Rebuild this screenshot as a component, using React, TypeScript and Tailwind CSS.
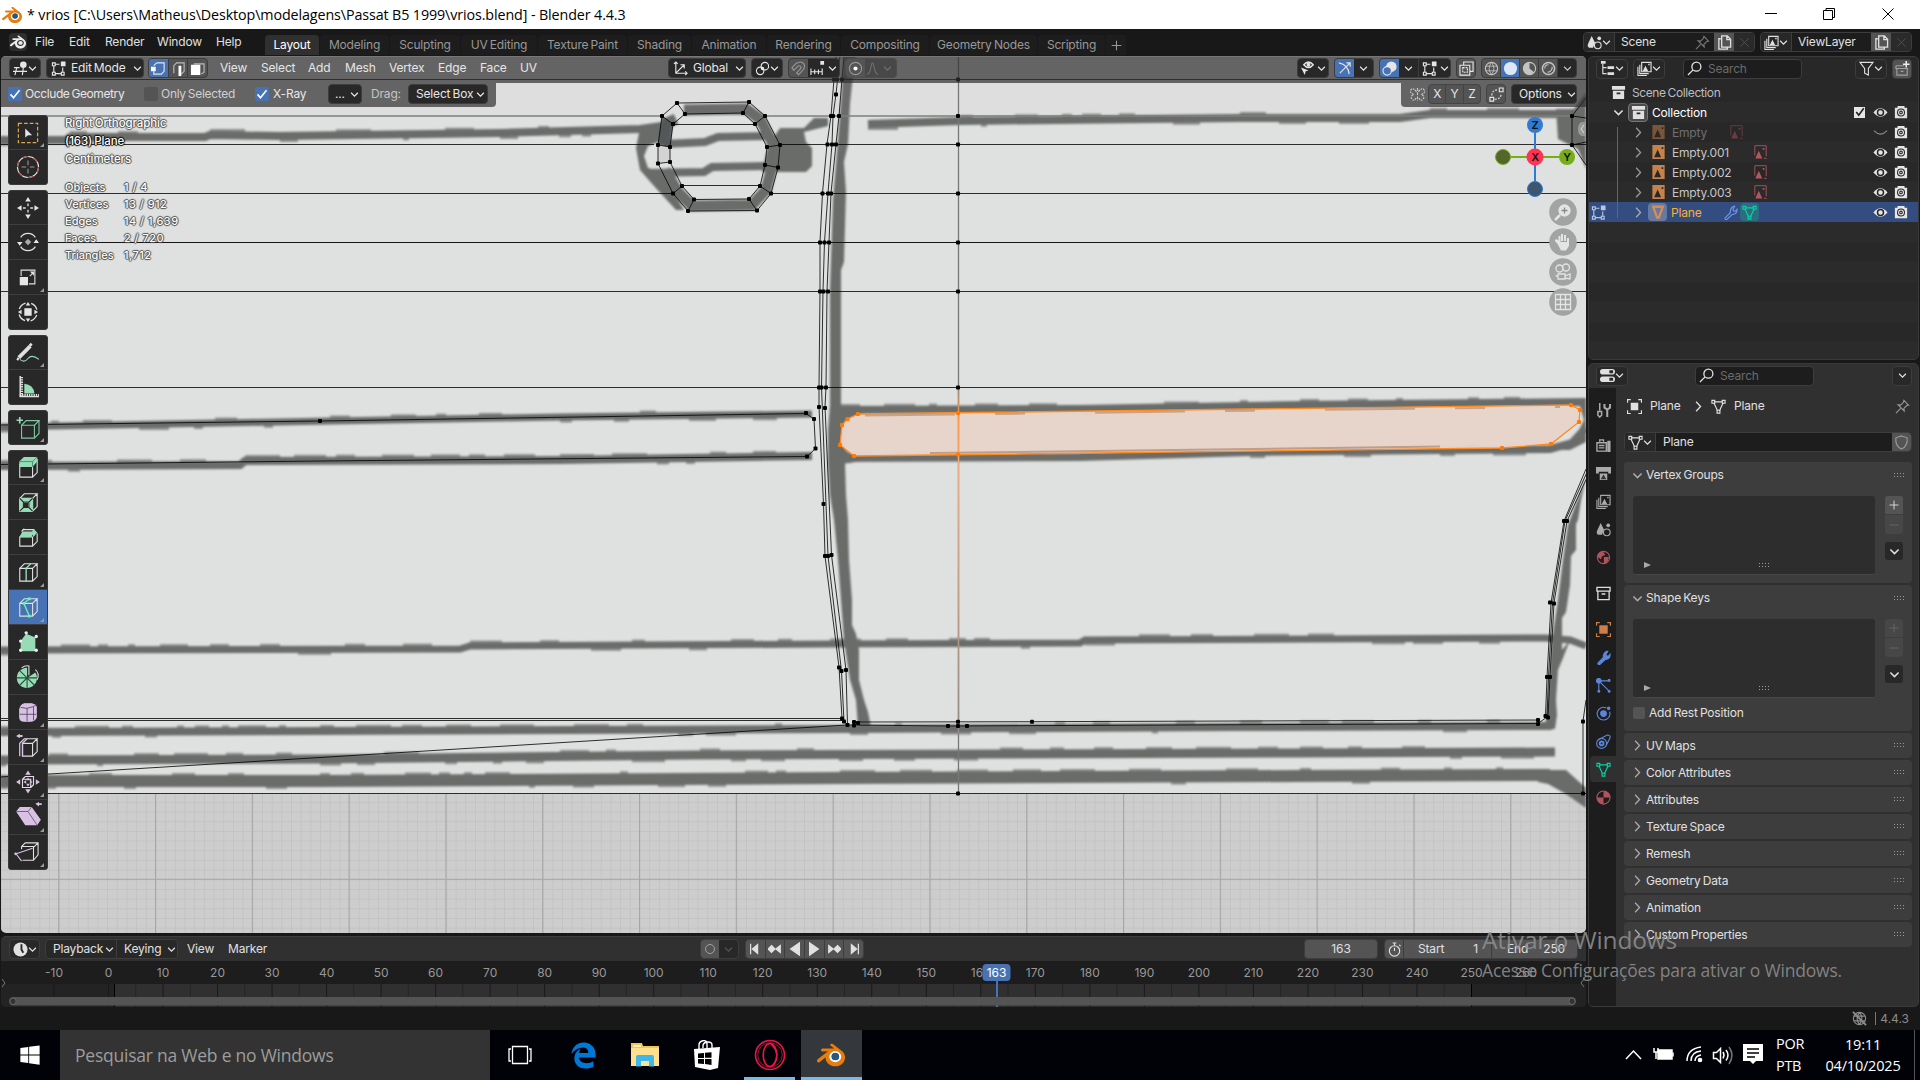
import type { ReactNode } from 'react';
import { FaEdgeLegacy, FaWindows } from 'react-icons/fa6';
import { SiBlender } from 'react-icons/si';

type IconProps = { className?: string; children?: ReactNode };

/* ---------- icons ---------- */

function Ico({ className = 'w-[15px] h-[15px]', children }: IconProps) {
    return (
        <svg viewBox="0 0 16 16" className={`${className} shrink-0`} fill="none" stroke="currentColor" strokeWidth="1.2">
            {children}
        </svg>
    );
}

const Chevron = ({ className = 'w-[9px] h-[9px]' }: IconProps) => (
    <Ico className={className}><path d="M2 5l6 6 6-6" strokeWidth="2.200" /></Ico>
);
const ChevronRight = ({ className = 'w-[11px] h-[11px]' }: IconProps) => (
    <Ico className={className}><path d="M4.500 1l6.500 7-6.500 7" strokeWidth="1.900" /></Ico>
);
const Search = () => <Ico><circle cx="10" cy="6" r="4.800" strokeWidth="1.400" /><path d="M6.500 9.500L1 15" strokeWidth="1.400" /></Ico>;
const Pin = () => <Ico><path d="M9.500 1.500l5 5-2 .5-3 3 .3 2.700-6.500-6.500 2.700.3 3-3zM6 10l-5 5" /></Ico>;
const NewDoc = () => <Ico><path d="M4 4H2v11h9v-2M5 1h6l3.500 3.500V13H5zM10.500 1v4h4" strokeWidth="1.400" /></Ico>;
const Cross = () => <Ico className="w-[11px] h-[11px]"><path d="M2 2l12 12M14 2L2 14" /></Ico>;
const MeshData = ({ className }: IconProps) => (
    <Ico className={className}><path d="M3.500 3h9M3 4l4 8.500M13 4L9 12.500" /><path d="M1 1.500h3v3H1zM12 1.500h3v3h-3zM6.500 12h3v3h-3z" /></Ico>
);
const EditMode = ({ className }: IconProps) => (
    <Ico className={className}>
        <path d="M1.500 2h3v3h-3zM1.500 12h3v3h-3zM11 12h3v3h-3zM3 5v7M4.500 13.500H11M12.500 7v5M4.500 3.500H9" />
        <path d="M10.500.5h5v5h-5z" fill="currentColor" stroke="none" />
    </Ico>
);
const Layers = ({ className }: IconProps) => (
    <Ico className={className}>
        <path d="M5 1.500h10v10H5zM3 4v9.500h9.500M1 6v9.500h9.500" />
        <path d="M6 11l3-6 3 6zM12 3h1.500v1.500H12z" fill="currentColor" stroke="none" />
    </Ico>
);
const SceneIcon = ({ className }: IconProps) => (
    <Ico className={className}>
        <path d="M5 1l3.500 7-2 5.500H2Q0 12 1 9.500z" fill="currentColor" stroke="none" />
        <circle cx="11.500" cy="11" r="3.600" /><circle cx="13" cy="3.500" r="2" fill="currentColor" stroke="none" />
    </Ico>
);
const Archive = ({ className }: IconProps) => (
    <Ico className={className}><path d="M1 1.500h14v4H1zM2 5.500h12v9H2zM6 8.500h4" strokeWidth="1.400" /></Ico>
);
const ArchiveSolid = () => (
    <Ico><path d="M1 1h14v4H1zM2 6h12v9H2z" fill="currentColor" stroke="none" /><path d="M6 9h4" stroke="#282828" strokeWidth="1.800" /></Ico>
);
const Eye = () => (
    <Ico><path d="M.5 8Q8-1 15.500 8 8 17 .5 8z" fill="currentColor" stroke="none" /><circle cx="8" cy="8" r="3.200" stroke="#282828" strokeWidth="1.600" /></Ico>
);
const EyeShut = () => <Ico><path d="M1 6q7 7.500 14 0" /></Ico>;
const Camera = () => (
    <Ico className="w-[14px] h-[14px]"><path d="M1 3h3V1h8v2h3v12H1z" fill="currentColor" stroke="none" /><circle cx="8" cy="8.500" r="4" stroke="#282828" /><circle cx="8" cy="8.500" r="1.500" stroke="#282828" /></Ico>
);
const ImageSolid = ({ className }: IconProps) => (
    <Ico className={className}><path d="M1 0h14v16H1z" fill="currentColor" stroke="none" /><path d="M3 14l4-9 4 9zM11.500 2.500h2v2h-2z" fill="#282828" stroke="none" /></Ico>
);
const ImageLine = ({ className }: IconProps) => (
    <Ico className={className}><path d="M1.500 12V.8h13v12M12 15.200h3" strokeWidth="1" /><path d="M2 15.500l4-9 4 9zM10.500 3.500h2v2h-2z" fill="currentColor" stroke="none" /></Ico>
);
const Wrench = ({ className }: IconProps) => (
    <Ico className={className}><path d="M2 14l6-6Q7 4 11 1.500l1.500 0-2 3.500 1 1.500h2l1.500-2q.5 5-5 5.500l-6 5.500q-2 .5-2-1.500z" /></Ico>
);
const Dots = () => (
    <svg viewBox="0 0 11 5" className="w-[11px] h-[5px] shrink-0" fill="#9a9a9a">
        {[0, 3, 6, 9].map((x) => [0, 3].map((y) => <rect key={`${x}-${y}`} x={x} y={y} width="1" height="1" />))}
    </svg>
);
const BlenderColor = ({ className }: IconProps) => (
    <svg viewBox="0 0 24 24" className={className}>
        <circle cx="15.700" cy="13.300" r="5.600" fill="#fff" />
        <SiBlender color="#e87d0d" size={24} />
        <circle cx="15.700" cy="13.300" r="3.300" fill="#265787" />
    </svg>
);

/* ---------- viewport drawing ---------- */

// scanned blueprint lines: points + thickness
const STROKES: [string, number][] = [
    ['0,140 66,140 70,137 205,137 210,135 280,136 500,133 640,129 662,126', 8],
    ['868,124 960,121 1240,118 1400,118 1430,114 1570,114', 8],
    ['0,427 330,421 560,417 812,414', 7],
    ['0,466 240,465 245,461 560,460 812,456', 8],
    ['838,410 1080,409 1300,405 1586,402', 8],
    ['838,458 1080,457 1250,452 1440,450 1550,449 1572,443 1586,428', 8],
    ['0,650 460,649 470,646 830,644 1080,643 1085,640 1545,638 1570,640 1586,646', 7],
    ['0,732 320,731 850,729 1240,727 1552,726', 8],
    ['0,760 320,759 700,755 1000,754 1300,753 1555,752', 9],
    ['0,781 320,781 840,778 1300,776 1550,775', 12],
];

const BLACK_LINES = [
    '0,79.500 1586,79.500', '0,144.500 654,144.500', '780,144.500 1586,144.500', '0,193.500 672,193.500', '771,193.500 1586,193.500',
    '0,291.500 1586,291.500', '0,387.500 1586,387.500', '0,793.500 1586,793.500',
    '0,425 320,421 806,413.500 814,419 815.500,448.500 807,456.500 320,461 0,464.500',
    '836,56 834,79 831,116 827,144 822.500,193 820,242 820,291 819,387 819,407 823.500,504 825,556 839,667 842,718.500',
    '840,56 836,94 833,116 832,144 828,193 824.500,242 823,291 821.500,387 828,556 841.500,671 844,721.500',
    '844,56 842,79 839,116 836,144 831,193 829,242 827,291 826,387 825,407 831.500,555 846,670 847.500,725',
    '0,718.500 842,718.500 847.500,725', '0,720.500 842,720.500',
    '0,777 320,757.500 847,725', '854,722 1032,721.700 1538,720', '847,725 948,726 1538,723.500 1547,717',
    '1586,469 1564,521 1551,603 1547,677 1545.500,716', '1588,470 1565,521 1552.500,603 1548.500,677 1547,717', '1590,471 1567,521 1554,603 1550,677 1548,717',
    '1586,700 1583,721 1583,793',
    '1586,98 1572,116 1572,145 1586,165', '1572,116 1586,118', '1572,145 1586,142',
];

const RING_OUTER = [[677, 103], [749, 102], [765, 116], [780, 145], [778, 167.500], [771, 193.500], [757, 210.500], [688, 211], [673, 193.500], [658, 163.500], [658, 145], [662, 116]];
const RING_INNER = [[685, 114], [743, 113], [755, 124], [767, 147], [765, 165], [760, 186], [749, 199], [694, 199.500], [682, 186], [670, 162], [670, 147], [673, 124]];

const BLACK_DOTS = [
    ...RING_OUTER, ...RING_INNER,
    ...[79.500, 116, 144.500, 193.500, 242.500, 291.500, 387.500, 721.700, 726, 793.500].map((y) => [958, y]),
    [834, 79.500], [837, 79.500], [842, 79.500], [836, 94.500], [831, 116], [833, 116], [839, 116], [827.500, 144.500], [832, 144.500], [836, 144.500],
    [822.500, 193.500], [828, 193.500], [831, 193.500], [820, 242.500], [824.500, 242.500], [829, 242.500], [820, 291.500], [823.500, 291.500], [828, 291.500],
    [819, 387.500], [821.500, 387.500], [826, 387.500], [819, 407], [825, 408], [823.500, 504], [825, 556], [828, 556], [831.500, 555],
    [839, 667.500], [841.500, 671], [846, 670], [842, 718.500], [844, 721.500], [847.500, 725], [854, 722], [858, 723], [854, 725.500],
    [948, 726], [967, 726], [1032, 721.700], [320, 421], [806, 413], [814, 419], [815.500, 448.500], [807, 456.500],
    [1564, 521], [1567, 521], [1550, 602.500], [1554, 603.500], [1547, 677], [1550, 677], [1538, 720], [1538, 724], [1545.500, 716], [1548, 717.500],
    [1583, 721.500], [1583, 793.500], [1572, 116], [1572, 145],
];

const ORANGE_DOTS = [[858, 414], [847.500, 419], [842, 425], [840, 445], [854, 456], [958, 413], [958, 454.500], [1571, 405], [1580, 410], [1579, 422], [1551, 444], [1502, 448]];

const toPoints = (list: number[][]) => list.map((p) => p.join(',')).join(' ');

// ragged pixels sitting on the edges of a scanned line
function ragged(points: string, width: number) {
    const pts = points.split(' ').map((p) => p.split(',').map(Number));
    const out: ReactNode[] = [];
    let seed = Math.round(pts[0][1]) * 7 + 3;
    for (let i = 0; i < pts.length - 1; i++) {
        const [x0, y0] = pts[i];
        const [x1, y1] = pts[i + 1];
        for (let x = x0; x < x1 - 40;) {
            seed = (seed * 1103 + 12345) % 65536;
            const w = 6 + (seed % 30);
            const y = y0 + ((y1 - y0) * (x - x0)) / (x1 - x0);
            const top = seed % 3 !== 0;
            out.push(<rect key={`${i}-${x}`} x={x} y={top ? y - width / 2 - 2 : y + width / 2 - 1} width={w} height="3" />);
            x += w + 8 + (seed % 37);
        }
    }
    return out;
}

function Scene() {
    return (
        <svg className="absolute left-0 top-0 w-[1585px] h-[877px]" viewBox="1 56 1585 877">
            <defs>
                <filter id="soft"><feGaussianBlur stdDeviation="1" /></filter>
                <pattern id="minor" x="58.700" y="879.300" width="9.680" height="9.680" patternUnits="userSpaceOnUse">
                    <path d="M0 .5H9.680M.5 0V9.680" stroke="#c3c3c3" />
                </pattern>
                <pattern id="major" x="58.200" y="878.800" width="96.800" height="96.800" patternUnits="userSpaceOnUse">
                    <path d="M0 .5H96.800M.5 0V96.800" stroke="#a6a6a6" strokeWidth="1.200" />
                </pattern>
                <linearGradient id="edge" gradientUnits="userSpaceOnUse" x1="0" y1="387" x2="0" y2="735">
                    <stop offset="0" stopColor="#9a8a80" /><stop offset="0.100" stopColor="#ff9a45" /><stop offset="0.250" stopColor="#eaae88" /><stop offset="1" stopColor="#948a85" />
                </linearGradient>
            </defs>
            <rect x="0" y="56" width="1586" height="60" fill="#dedede" />
            <rect x="0" y="116" width="1586" height="678" fill="#dfe1e0" />
            <rect x="0" y="794" width="1586" height="140" fill="#cdcdcd" />
            <rect x="0" y="794" width="1586" height="140" fill="url(#minor)" />
            <rect x="0" y="794" width="1586" height="140" fill="url(#major)" />

            <g filter="url(#soft)" fill="none" stroke="#6b6c6b">
                {STROKES.map(([pts, w]) => <polyline key={pts} points={pts} strokeWidth={w} />)}
                <g fill="#6b6c6b" stroke="none" opacity="0.7">
                    {STROKES.map(([pts, w]) => <g key={pts}>{ragged(pts, w)}</g>)}
                </g>
                <g fill="#6b6c6b" stroke="none">
                    <path d="M844 56L856 56 852 84 850 104 848 144 844 162 846 192 844 262 841 270 841 405 845 412 845 462 846 495 848 520 849 560 852 600 852 625 856 634 859 650 859 680 864 700 868 712 871 727 858 727 856 700 850 680 844 640 841 600 838 560 834 520 830 495 828 462 828 430 830 405 830 290 833 200 838 140 842 90z" />
                    <path d="M838 407H864L863 414 847 420 842 426V446L852 456 866 460 850 463 838 464z" />
                    <path d="M1586 478L1581 500 1578 520 1576 524V550L1571 556 1570 585 1566 612 1562 618V650L1570 640 1563 658 1558 670 1556 700 1557 715 1555 729H1545L1548 700 1552 640 1558 600 1563 560 1568 525z" />
                    <path d="M1556 109h18l12-16v76l-8-20-8-4-12-6z" />
                    <path d="M640 128l26-2-8 16-10 4-4 10 4 12 14 4 10 18 12 20h-8l-22-24-14-16-4-22z" />
                    <path d="M780 128l24 0 10-10h14v8l-24 6 2 10 6 6v18l-6 6h-44l6-26z" />
                    <path d="M1586 400v42l-16 8-20 0 24-10 10-20-4-14z" />
                    <path d="M1538 770h28l20 18v20l-20-14-18-10-10-2z" />
                </g>
                <path d="M684 110L746 109 760 119 774 146M772 167L766 190 752 205 692 206 678 192 665 170M676 119L667 123 664 145" strokeWidth="11" />
                <path d="M664 144L705 142 718 137 768 136M646 173L704 172 712 167 770 166" strokeWidth="8" />
            </g>
            <polygon points="662,116 673,124 670,147 658,145" fill="#4c4e50" opacity="0.7" />
            <polygon points="658,145 670,147 670,162 658,163" fill="#d2d3d2" />

            <polygon points="858,414 1571,405 1580,410 1579,422 1551,444 1502,448 854,456 840,445 842,425 847.500,419" fill="#e7d5cb" fillOpacity="0.97" stroke="#ff8a1e" strokeWidth="1.300" />
            <path d="M865 415.500L1560 407" stroke="#b08468" strokeWidth="2" opacity="0.6" strokeDasharray="90 40 30 70" />
            <path d="M930 453L1440 446.500" stroke="#a87a5e" strokeWidth="2" opacity="0.6" />

            <path d="M0 116H662M765 116H1572" stroke="#7d7f7e" strokeWidth="1.500" />
            <path d="M0 242.500H1586" stroke="#151515" strokeWidth="1.200" />
            <path d="M958.500 56V793" stroke="#777" strokeWidth="1.300" />
            <path d="M958 387h1V735h-1z" fill="url(#edge)" stroke="url(#edge)" strokeWidth=".5" />
            <g fill="none" stroke="#000" strokeOpacity="0.8">
                {BLACK_LINES.map((pts) => <polyline key={pts} points={pts} />)}
                <polygon points={toPoints(RING_OUTER)} />
                <polygon points={toPoints(RING_INNER)} />
                {RING_OUTER.map((p, i) => <line key={i} x1={p[0]} y1={p[1]} x2={RING_INNER[i][0]} y2={RING_INNER[i][1]} />)}
                <path d="M673 124.500H755M682 185.500H760" />
            </g>
            {BLACK_DOTS.map(([x, y], i) => <rect key={i} x={x - 2} y={y - 2} width="4" height="4" rx="1" />)}
            {ORANGE_DOTS.map(([x, y], i) => <rect key={i} x={x - 2} y={y - 2} width="4" height="4" rx="1" fill="#ff7a00" />)}
        </svg>
    );
}

function NavGizmo() {
    return (
        <svg className="absolute left-[1490px] top-[56px] w-[95px] h-[210px]" viewBox="1491 112 95 210">
            <path d="M1535 133V181" stroke="#2f7bd3" strokeWidth="2" />
            <path d="M1511 157H1559" stroke="#77ad18" strokeWidth="2" />
            <circle cx="1535" cy="125" r="8" fill="#2f7bd3" />
            <circle cx="1503" cy="157" r="7.500" fill="#55662d" stroke="#77ad18" />
            <circle cx="1567" cy="157" r="8" fill="#77ad18" />
            <circle cx="1535" cy="189" r="7.500" fill="#3d556f" stroke="#2f7bd3" />
            <circle cx="1535" cy="157" r="8.500" fill="#ff3352" />
            <g fontFamily="Inter, sans-serif" fontSize="11" fontWeight="600" textAnchor="middle" fill="#111">
                <text x="1535" y="129">Z</text><text x="1535" y="161">X</text><text x="1567" y="161">Y</text>
            </g>
            {[212, 242, 272, 302].map((y) => <circle key={y} cx="1563" cy={y} r="13.800" fill="#a2a3a3" />)}
            <g stroke="#e4e4e4" fill="none" strokeWidth="1.300">
                <circle cx="1564.500" cy="210.500" r="5.500" fill="#e4e4e4" /><path d="M1560 215l-5 5" strokeWidth="2.500" /><path d="M1561.500 210.500h6M1564.500 207.500v6" stroke="#888" />
                <path d="M1558 243l-2.500-3 4 2v-6M1562 241v-7M1565 241v-6M1568 242v-4" strokeWidth="2" />
                <path d="M1556 241l4 1h9v4l-3 4.500h-5z" fill="#e4e4e4" stroke="none" />
                <circle cx="1559.500" cy="268.500" r="3.500" /><circle cx="1566" cy="267.500" r="3.500" /><path d="M1558 274h7v5h-7zM1565 276l5-2v5l-5-1M1558 276h-2.500" />
                <path d="M1555.500 294.500h15v15h-15zM1555.500 299.500h15M1555.500 304.500h15M1560.500 294.500v15M1565.500 294.500v15" />
            </g>
            <path d="M1586 122h-4q-4 1-4 7t4 7h4z" fill="#999" /><path d="M1584 125l-3 4 3 4" stroke="#ddd" fill="none" />
        </svg>
    );
}

/* ---------- tool icons (24 x 24) ---------- */

const CUBE = 'M3 8h14v14H3zM3 8l5-5h14l-5 5M22 3v14l-5 5';
const G = '#97dcb7';
const P = '#d9c1e6';

const TOOL_GROUPS: { id: string; corner?: boolean; active?: boolean; art: ReactNode }[][] = [
    [
        { id: 'select', corner: true, art: <><rect x="1.500" y="1.500" width="21" height="21" stroke="#d9a84f" strokeDasharray="4 2.200" strokeWidth="1.300" /><path d="M9 7v10l3-2.500h4.500z" fill="#e6e6e6" stroke="none" /></> },
        { id: 'cursor', art: <><circle cx="12" cy="12" r="11.500" /><circle cx="12" cy="12" r="11.500" stroke="#b4474b" strokeDasharray="6 6" /><path d="M12 5v5M12 14v5M5 12h5M14 12h5" stroke="#999" /></> },
    ],
    [
        { id: 'move', art: <path d="M12 0l3 5H9zM12 24l3-5H9zM0 12l5-3v6zM24 12l-5-3v6zM11.300 7h1.400v3h-1.400zM11.300 14h1.400v3h-1.400zM6.500 11.300h3v1.400h-3zM14.500 11.300h3v1.400h-3z" fill="#e6e6e6" stroke="none" /> },
        { id: 'rotate', art: <><path d="M4 7a9.500 9.500 0 0 1 16 0M20 17a9.500 9.500 0 0 1-16 0" strokeWidth="1.400" /><path d="M0 12h6l-3 4zM18 13h6l-3-4z" fill="#e6e6e6" stroke="none" /><path d="M12 8.500l3.500 3.500-3.500 3.500L8.500 12z" fill="#aaa" stroke="none" /></> },
        { id: 'scale', corner: true, art: <><path d="M4.500 11V4.500h15v15H13M14 11l4-4" /><path d="M3 12h9v9H3zM14 6h4.500v4.500z" fill="#e6e6e6" stroke="none" /></> },
        { id: 'transform', art: <><circle cx="12" cy="12" r="10" strokeDasharray="9.500 6.200" strokeDashoffset="-3.200" strokeWidth="1.500" /><path d="M8 8h8v8H8zM12 1l2.500 4h-5zM12 23l2.500-4h-5zM1 12l4-2.500v5zM23 12l-4-2.500v5z" fill="#e6e6e6" stroke="none" /></> },
    ],
    [
        { id: 'annotate', corner: true, art: <><path d="M2 17L14.500 4.500" strokeWidth="4" /><path d="M0 18l2 1M14 2l2 2" strokeWidth="3" /><path d="M3 19q5 4 9-1t12 1" stroke={G} /></> },
        { id: 'measure', art: <><path d="M5 1v22M3 21h21" strokeWidth="3" strokeDasharray="1.500 1" /><path d="M3.500 0v22.500H24" strokeWidth="1.600" /><path d="M8 19V8.500q10 1 11 10.500z" fill={G} stroke="none" /></> },
    ],
    [{ id: 'add', corner: true, art: <><path d="M5 9h14v14H5zM5 9l5-5h14l-5 5M24 4v14l-5 5" stroke="#7dc8a1" /><path d="M3 0v7M-.5 3.500h7" stroke={G} strokeWidth="1.800" /></> }],
    [
        { id: 'extrude', corner: true, art: <><path d={CUBE} /><path d="M2.500 5l5-5H22v5l-5 6H2.500z" fill={G} stroke="none" /><path d="M3 5h14l5-5M17 5v6" stroke="#2d7853" strokeWidth=".8" /></> },
        { id: 'inset', art: <><path d={CUBE} /><path d="M2.500 7.500h15v15h-15z" fill={G} stroke="none" /><path d="M7 12h6v6H7z" fill="#282828" /><path d="M7 12h6v6H7zM3 8l4 4M17 8l-4 4M3 22l4-4M17 22l-4-4" stroke="#282828" /></> },
        { id: 'bevel', art: <><path d="M3 12h14v10H3zM6 4h13M22 8v9l-5 5M5 6l3-3" /><path d="M2.500 12L6 6h12l-2 6zM18 3l4 4-4 5-2-5z" fill={G} stroke="none" /></> },
        { id: 'loopcut', corner: true, art: <><path d={CUBE} /><path d="M10 22V8l5-5" stroke={G} strokeWidth="1.500" /></> },
        { id: 'knife', corner: true, active: true, art: <><path d={CUBE} /><path d="M13.500 3L7.500 8l6 14" stroke="#6ff0ae" strokeWidth="1.500" /><path d="M12 1.500h3v3h-3zM6 6.500h3v3H6zM12 20.500h3v3h-3z" fill="#6ff0ae" stroke="none" /></> },
        { id: 'polybuild', art: <><path d="M10 3l10 4v15H4V11z" fill={G} stroke="none" /><g fill="#eee" stroke="none"><circle cx="10" cy="2" r="1.800" /><circle cx="21" cy="6" r="1.800" /><circle cx="4" cy="11" r="1.800" /><circle cx="4" cy="21" r="1.800" /><circle cx="21" cy="21" r="1.800" /></g></> },
        { id: 'spin', art: <><path d="M5 2q4-3 8-2v10M20 4q5 4 2 11" strokeWidth="1.200" /><path d="M11 13V2a11 11 0 1 0 9 5z" fill={G} stroke="none" /><path d="M11 13V24M11 13H0M11 13h11M11 13L3 5M11 13l-8 8M11 13l8 8" stroke="#23503a" /></> },
        { id: 'smooth', corner: true, art: <><path d="M8 3h8q5 1 5 4v11q-2 4-6 4H8q-5 0-5-4V9q1-5 5-6z" fill={P} stroke={P} /><path d="M3 14.500h18M11 8v14M4 7l7 1 7-2 3-2M18 6v15" stroke="#4d4454" strokeWidth=".9" /></> },
        { id: 'edgeslide', corner: true, art: <><path d="M6 8h11v14H6zM3 22V8l5-5h14l-5 5M22 3v14l-5 5" /><path d="M6 22V8l5-5" stroke={P} strokeWidth="1.500" /><path d="M-1 0l4-2.500V-1h3v2H3v1.500z" fill={P} stroke="none" /></> },
        { id: 'shrink', corner: true, art: <><path d="M6 9h9v9H6zM6 9l3-3h9v9l-3 3" /><path d="M12-.5l3 4.500H9zM12 24.500l3-4.500H9zM-1 12l4.500-3v6zM25 12l-4.500-3v6zM12 7l2 3h-4zM12 17l2-3h-4zM7 12l3-2v4zM17 12l-3-2v4z" fill={P} stroke="none" /></> },
        { id: 'shear', corner: true, art: <><path d="M-1 6l4-5h13l10 14-4 6H9z" fill={P} stroke="none" /><path d="M-1 6h13l10 15M12 6l4-5" stroke="#5d5066" strokeWidth=".9" /><path d="M20-2.500l4-2V-3h3v2h-3v1.500z" fill={P} stroke="none" /></> },
        { id: 'rip', corner: true, art: <><path d="M5 9v-3l4-4h14v13l-5 6H6M18 8v13M18 7l5-5M5 6h13v3" /><path d="M17 8L-1 14l6 8" stroke={P} /><circle cx="-1.500" cy="14" r="1.500" fill={P} stroke="none" /></> },
    ],
];

function ToolShelf() {
    return (
        <div className="absolute left-[7px] top-[59px] flex flex-col gap-[5px]">
            {TOOL_GROUPS.map((group) => (
                <div key={group[0].id} className="w-[40px] rounded-[3px] border border-[#3a3a3a] bg-[#282828] overflow-hidden divide-y divide-[#3f3f3f]">
                    {group.map((tool, i) => (
                        <div
                            key={tool.id}
                            className={`relative flex items-center justify-center ${i === 0 || i === group.length - 1 ? (group.length === 1 ? 'h-[33px]' : 'h-[34px]') : 'h-[35px]'} ${tool.active ? 'bg-[#4772b3]' : ''}`}
                        >
                            <svg viewBox="0 0 24 24" className="w-[22px] h-[22px] overflow-visible" fill="none" stroke="#e0e0e0" strokeWidth="1.200">{tool.art}</svg>
                            {tool.corner && <span className="absolute right-[3px] bottom-[2px] w-[4px] h-[4px] bg-[#999] [clip-path:polygon(100%_0,100%_100%,0_100%)]" />}
                        </div>
                    ))}
                </div>
            ))}
        </div>
    );
}

/* ---------- small widgets ---------- */

const DARK_BTN = 'flex h-[20px] items-center rounded-[4px] border border-[#3d3d3d] bg-[#282828] shrink-0';

function Check({ on }: { on?: boolean }) {
    return (
        <span className={`flex w-[14px] h-[14px] shrink-0 items-center justify-center rounded-[2px] ${on ? 'bg-[#4772b3]' : 'bg-[#545454]'}`}>
            {on && <Ico className="w-[12px] h-[12px] text-white"><path d="M2 8.500l4 4.500 8-10" strokeWidth="2.200" /></Ico>}
        </span>
    );
}

const HEADER_MENUS = [
    { label: 'View', w: 'w-[41px]' }, { label: 'Select', w: 'w-[47px]' }, { label: 'Add', w: 'w-[37px]' }, { label: 'Mesh', w: 'w-[44px]' },
    { label: 'Vertex', w: 'w-[49px]' }, { label: 'Edge', w: 'w-[42px]' }, { label: 'Face', w: 'w-[40px]' }, { label: 'UV', w: 'w-[30px]' },
];

function ViewportHeader() {
    return (
        <>
            <div className="relative flex h-[27px] items-start bg-[#303030]/70 border-t border-[#777] pt-[1px] text-[#e6e6e6]">
                <div className={`${DARK_BTN} ml-[8px] w-[32px] justify-around px-[3px]`}>
                    <Ico><path d="M0 11h15M2 15l2-8M10 15l1-8M1 7h6" /><circle cx="11" cy="4" r="3.500" fill="currentColor" stroke="none" /></Ico>
                    <Chevron />
                </div>
                <div className={`${DARK_BTN} ml-[5px] w-[98px] pl-[4px]`}>
                    <EditMode />
                    <span className="ml-[5px] w-[62px]">Edit Mode</span>
                    <Chevron />
                </div>
                <div className="ml-[4px] mr-[1px] flex h-[20px] w-[60px] overflow-hidden rounded-[4px] border border-[#3d3d3d] divide-x divide-[#3d3d3d] bg-[#545454]">
                    <span className="flex flex-1 items-center justify-center bg-[#4772b3]"><Ico><path d="M6 2h8v9l-3 3H3v-3M3 5l3-3" /><path d="M0 6h5v5H0z" fill="#fff" stroke="none" /></Ico></span>
                    <span className="flex flex-1 items-center justify-center text-[#bbb]"><Ico><path d="M3 13V5l3-3h8v9l-3 3" /><path d="M8 5h3v11H8z" fill="#fff" stroke="none" /></Ico></span>
                    <span className="flex flex-1 items-center justify-center text-[#bbb]"><Ico><path d="M4 3h11v9l-3 2" /><path d="M1 4h10v11H1z" fill="#fff" stroke="none" /></Ico></span>
                </div>
                <div className="ml-[11px] mr-[1px] flex h-[20px] items-center">
                    {HEADER_MENUS.map((m) => <span key={m.label} className={m.w}>{m.label}</span>)}
                </div>
                <div className={`${DARK_BTN} ml-[117px] w-[78px] pl-[4px]`}>
                    <Ico><path d="M3 1v12h12M3 13l9-9M8 4h4v4M1 3l2-2 2 2M13 11l2 2-2 2" /></Ico>
                    <span className="ml-[5px] w-[42px]">Global</span>
                    <Chevron />
                </div>
                <div className={`${DARK_BTN} ml-[5px] w-[32px] justify-around px-[3px]`}>
                    <Ico><circle cx="10.500" cy="5.500" r="4" /><circle cx="5.500" cy="10.500" r="4" /><circle cx="8" cy="8" r="1.200" fill="currentColor" /></Ico>
                    <Chevron />
                </div>
                <div className={`${DARK_BTN} ml-[5px] w-[52px] overflow-hidden`}>
                    <span className="flex h-full w-[19px] items-center justify-center bg-[#545454] text-[#999]"><Ico><path d="M1 7l4-4q6-4 8.500 0t-2 8l-3.500 3.500-2-2 4-4q1.500-2 0-3t-3 .5L3 10z" /></Ico></span>
                    <Ico className="ml-[2px] w-[15px] h-[15px]"><path d="M1 8v7M5 9v5M9 9v5M13 8v7M1 11.500h12" /><path d="M11 0h4v4h-4z" fill="currentColor" stroke="none" /></Ico>
                    <Chevron className="ml-[3px] w-[9px] h-[9px]" />
                </div>
                <div className="ml-[5px] flex h-[20px] w-[52px] items-center overflow-hidden rounded-[4px] border border-[#4d4d4d] bg-[#484848] text-[#707070]">
                    <span className="flex h-full w-[19px] items-center justify-center bg-[#545454] text-[#999]"><Ico><circle cx="8" cy="8" r="6.500" /><circle cx="8" cy="8" r="2.200" fill="#fff" stroke="none" /></Ico></span>
                    <Ico><path d="M2 14q3 0 4-6t2-6 2 6 4 6" /></Ico>
                    <Chevron className="ml-[3px] w-[9px] h-[9px]" />
                </div>
                <div className="flex-1" />
                <div className={`${DARK_BTN} w-[32px] justify-around px-[2px]`}>
                    <Ico><path d="M3 4q5-6 10 0-5 6-10 0z" strokeWidth="1.600" /><circle cx="8" cy="4" r="1.500" fill="currentColor" /><path d="M0 7l8 3-3 1-1 4z" fill="currentColor" stroke="none" /></Ico>
                    <Chevron />
                </div>
                <div className={`${DARK_BTN} ml-[5px] w-[40px] overflow-hidden`}>
                    <span className="flex h-full w-[19px] items-center justify-center bg-[#4772b3]"><Ico><path d="M2 2q10 2 11 12M3 13L14 2M10 2h4v4" /></Ico></span>
                    <Chevron className="ml-[5px] w-[9px] h-[9px]" />
                </div>
                <div className={`${DARK_BTN} ml-[5px] w-[72px] overflow-hidden`}>
                    <span className="flex h-full w-[19px] items-center justify-center bg-[#4772b3]"><Ico><circle cx="10" cy="6" r="5" fill="currentColor" /><circle cx="5.500" cy="10.500" r="4.500" fill="#4772b3" /></Ico></span>
                    <Chevron className="mx-[5px] w-[9px] h-[9px]" />
                    <span className="flex h-full flex-1 items-center gap-[3px] border-l border-[#3d3d3d] pl-[3px]"><EditMode /><Chevron /></span>
                </div>
                <span className="ml-[5px] flex h-[20px] w-[20px] items-center justify-center rounded-[4px] border border-[#3d3d3d] bg-[#545454]"><Ico><path d="M5 4V1h10v10h-3M1 4.500h10.500V15H1z" /><path d="M4 7h5v5H4z" strokeDasharray="2 1" /></Ico></span>
                <div className="ml-[5px] mr-[9px] flex h-[20px] w-[96px] items-center overflow-hidden rounded-[4px] border border-[#3d3d3d] divide-x divide-[#3d3d3d] bg-[#545454] text-[#c4c4c4]">
                    <span className="flex h-full w-[19px] items-center justify-center"><Ico><circle cx="8" cy="8" r="6.500" /><path d="M8 1.500q-5 6.500 0 13M8 1.500q5 6.500 0 13M2 5.500h12M2 10.500h12" strokeWidth=".9" /></Ico></span>
                    <span className="flex h-full w-[19px] items-center justify-center bg-[#4772b3]"><Ico><circle cx="8" cy="8" r="7" fill="#dbe6f7" stroke="none" /></Ico></span>
                    <span className="flex h-full w-[19px] items-center justify-center"><Ico><circle cx="8" cy="8" r="6.500" /><path d="M8 1.500a6.500 6.500 0 1 0 5 10.500L8 8z" fill="currentColor" stroke="none" /></Ico></span>
                    <span className="flex h-full w-[19px] items-center justify-center"><Ico><circle cx="8" cy="8" r="6.500" strokeWidth="1.600" /><path d="M4 8q0-4 4-4M12 6q0 5-5 6" /></Ico></span>
                    <span className="flex h-full flex-1 items-center justify-center bg-[#282828]"><Chevron /></span>
                </div>
            </div>
            <div className="relative flex h-[24px] justify-between text-[#e6e6e6]">
                <div className="flex w-[495px] items-start rounded-br-[4px] bg-[#303030]/70 pt-[1px]">
                    <div className="flex h-[20px] items-center">
                        <span className="ml-[7px]"><Check on /></span>
                        <span className="ml-[3px] w-[119px] tracking-[-0.400px]">Occlude Geometry</span>
                        <Check />
                        <span className="ml-[3px] w-[94px] tracking-[-0.300px] text-[#d0d0d0]">Only Selected</span>
                        <Check on />
                        <span className="ml-[4px] w-[55px]">X-Ray</span>
                    </div>
                    <div className={`${DARK_BTN} w-[34px] justify-between px-[6px]`}><span>...</span><Chevron className="w-[9px] h-[9px] -mr-[4px]" /></div>
                    <span className="ml-[9px] flex h-[20px] w-[37px] items-center text-[#c4c4c4]">Drag:</span>
                    <div className={`${DARK_BTN} w-[80px] pl-[7px]`}><span className="w-[60px]">Select Box</span><Chevron /></div>
                </div>
                <div className="flex w-[185px] items-start rounded-bl-[4px] bg-[#303030]/70 pt-[1px]">
                    <span className="ml-[9px] flex h-[20px] items-center text-[#ccc]"><Ico><path d="M7 5Q3 0 1 3t3 5q-4 2-2 5t5-2M9 5q4-5 6-2t-3 5q4 2 2 5t-5-2" strokeDasharray="2 1" /><path d="M8 1v14" strokeDasharray="3 1.500" /></Ico></span>
                    <div className="ml-[3px] flex h-[20px] w-[53px] overflow-hidden rounded-[4px] border border-[#444] divide-x divide-[#444] bg-[#545454]">
                        {['X', 'Y', 'Z'].map((a) => <span key={a} className="flex flex-1 items-center justify-center">{a}</span>)}
                    </div>
                    <span className="ml-[5px] flex h-[20px] w-[20px] items-center justify-center rounded-[4px] border border-[#444] bg-[#545454]"><Ico><path d="M1 11h4v4H1zM11 1h4v4h-4z" /><path d="M3 9q0-6 7-6M6 13q7 0 7-6" strokeDasharray="2 1.500" /></Ico></span>
                    <div className={`${DARK_BTN} ml-[5px] w-[66px] pl-[7px]`}><span className="w-[48px]">Options</span><Chevron /></div>
                </div>
            </div>
        </>
    );
}

const STATS = [['Objects', '1 / 4'], ['Vertices', '13 / 912'], ['Edges', '14 / 1,639'], ['Faces', '2 / 720'], ['Triangles', '1,712']];

function Viewport() {
    return (
        <div className="relative h-[877px] w-[1585px] overflow-hidden rounded-[5px]">
            <Scene />
            <ViewportHeader />
            <div className="absolute left-[64px] top-[58px] text-[11.500px] font-medium tracking-[-0.100px] text-white [text-shadow:0_0_1px_#444,1px_0_1px_#555,-1px_0_1px_#555,0_1px_1px_#555,0_-1px_1px_#555]">
                <div className="h-[18px] leading-[18px]">Right Orthographic</div>
                <div className="h-[18px] leading-[18px] [text-shadow:0_0_2px_#000,1px_0_1px_#111,-1px_0_1px_#111,0_1px_1px_#111,0_-1px_1px_#111]">(163) Plane</div>
                <div className="mb-[10.500px] h-[18px] leading-[18px]">Centimeters</div>
                {STATS.map(([k, v]) => (
                    <div key={k} className="flex h-[17px] text-[11px] leading-[17px] tracking-[0px]"><span className="w-[59px]">{k}</span><span className="tracking-[0.450px] [word-spacing:0px]">{v}</span></div>
                ))}
            </div>
            <NavGizmo />
            <ToolShelf />
        </div>
    );
}

/* ---------- timeline ---------- */

const FRAME_W = 5.452;
const FRAMES = Array.from({ length: 28 }, (_, i) => i * 10 - 10);
const TRANSPORT = [
    'M3 2v12M5 8l6-5v10z', 'M4 4l4 4-4 4-4-4zM9 8l5-4v8z', 'M3 8l10-7v14z', 'M13 8L3 1v14z', 'M12 4l4 4-4 4-4-4zM7 8L2 4v8z', 'M13 2v12M11 8L5 3v10z',
];

function Timeline() {
    return (
        <div className="relative flex h-[71px] w-[1585px] flex-col overflow-hidden rounded-[5px] border-t border-[#3d3d3d] bg-[#303030] text-[#e0e0e0]">
            <div className="flex h-[24px] shrink-0 items-center">
                <div className={`${DARK_BTN} ml-[8px] w-[31px] justify-around px-[3px]`}>
                    <Ico><circle cx="8" cy="8" r="7.500" fill="currentColor" stroke="none" /><path d="M9 2.500V8l2 3.500" stroke="#282828" strokeWidth="2" /></Ico>
                    <Chevron />
                </div>
                <div className={`${DARK_BTN} ml-[5px] w-[133px]`}>
                    <span className="flex h-full w-[71px] items-center border-r border-[#3d3d3d] pl-[7px]"><span className="w-[52px]">Playback</span><Chevron /></span>
                    <span className="flex items-center pl-[7px]"><span className="w-[43px]">Keying</span><Chevron /></span>
                </div>
                <span className="ml-[9px] w-[41px]">View</span>
                <span className="w-[472px]">Marker</span>
                <div className="flex h-[20px] w-[39px] items-center overflow-hidden rounded-[4px] border border-[#3d3d3d] bg-[#282828] text-[#555]">
                    <span className="mr-[5px] flex h-full w-[18px] items-center justify-center bg-[#545454] text-[#aaa]"><Ico className="w-[12px] h-[12px]"><circle cx="8" cy="8" r="6" /></Ico></span>
                    <Chevron />
                </div>
                <div className="ml-[6px] mr-[1px] flex h-[20px] w-[119px] overflow-hidden rounded-[4px] border border-[#3d3d3d] divide-x divide-[#3d3d3d] bg-[#545454]">
                    {TRANSPORT.map((d) => <span key={d} className="flex flex-1 items-center justify-center"><Ico className="w-[14px] h-[14px]"><path d={d} fill="currentColor" strokeWidth="1.400" /></Ico></span>)}
                </div>
                <span className="ml-[439px] flex h-[20px] w-[74px] items-center justify-center rounded-[4px] border border-[#3d3d3d] bg-[#545454] tracking-[0px]">163</span>
                <div className="ml-[6px] flex h-[20px] w-[194px] items-center overflow-hidden rounded-[4px] border border-[#3d3d3d] divide-x divide-[#3d3d3d] bg-[#545454]">
                    <span className="flex h-full w-[19px] items-center justify-center"><Ico><circle cx="8" cy="9.500" r="5.500" /><path d="M8 4V1M6 1h4M8 9.500V6M13 3l1.500 1.500" /></Ico></span>
                    <span className="flex h-full w-[88px] items-center justify-between pl-[14px] pr-[13px]"><span>Start</span><span>1</span></span>
                    <span className="flex h-full flex-1 items-center justify-between pl-[15px] pr-[12px]"><span>End</span><span>250</span></span>
                </div>
            </div>
            <svg className="h-[46px] w-[1585px] shrink-0" viewBox="1 961 1585 46" fontFamily="Inter, sans-serif" fontSize="12" letterSpacing="0">
                <rect x="0" y="961" width="1586" height="23.500" fill="#1d1d1d" />
                <rect x="0" y="984" width="1586" height="23" fill="#232323" />
                <rect x="114" y="984" width="1358" height="23" fill="#303030" />
                {FRAMES.map((f) => {
                    const x = 108.5 + f * FRAME_W;
                    return (
                        <g key={f}>
                            <path d={`M${x} 984V1007`} stroke="#1a1a1a" />
                            <path d={`M${x - 27.3} 984V1007`} stroke="#252525" />
                            {f <= 260 && <text x={x} y="977" fill="#989898" textAnchor="middle">{f}</text>}
                        </g>
                    );
                })}
                <path d="M114.500 984V1007M1471.500 984V1007" stroke="#000" />
                <path d="M997 980V1007" stroke="#4772b3" strokeWidth="2" />
                <rect x="982.500" y="964" width="28" height="17" rx="4" fill="#4772b3" />
                <text x="996.500" y="976.500" fill="#fff" textAnchor="middle">163</text>
                <rect x="9" y="997" width="1567" height="8.500" rx="4.200" fill="#545454" />
                <rect x="10" y="998" width="6" height="6.500" rx="3" fill="#333" stroke="#666" />
                <rect x="1569" y="998" width="6" height="6.500" rx="3" fill="#333" stroke="#666" />
                <path d="M2 979l3 4-3 4M1584 979l-3 4 3 4" stroke="#777" fill="none" />
            </svg>
        </div>
    );
}

/* ---------- outliner ---------- */

const EMPTIES = [
    { name: 'Empty', w: 'w-[57px]', hidden: true },
    { name: 'Empty.001', w: 'w-[81px]', hidden: false },
    { name: 'Empty.002', w: 'w-[81px]', hidden: false },
    { name: 'Empty.003', w: 'w-[81px]', hidden: false },
];

function Outliner() {
    return (
        <div className="relative flex h-[304px] flex-col overflow-hidden rounded-[5px] border border-[#3a3a3a] bg-[#282828] text-[#cfcfcf]">
            <div className="mb-[2px] flex h-[23px] shrink-0 items-center text-[#e0e0e0]">
                <div className={`${DARK_BTN} ml-[7px] w-[32px] justify-around px-[3px]`}>
                    <Ico><path d="M1 0v3h5V0zM8 5.500h7v3H8zM8 12h7v3H8z" fill="currentColor" stroke="none" /><path d="M3 3v10.500h4M3 7h4" /></Ico>
                    <Chevron />
                </div>
                <div className={`${DARK_BTN} ml-[5px] w-[32px] justify-around px-[3px]`}><Layers /><Chevron /></div>
                <div className="ml-[18px] flex h-[20px] w-[119px] items-center rounded-[4px] border border-[#3d3d3d] bg-[#1d1d1d] pl-[3px]">
                    <Search /><span className="ml-[6px] text-[#6c6c6c]">Search</span>
                </div>
                <div className={`${DARK_BTN} ml-[53px] w-[32px] justify-around px-[3px]`}><Ico><path d="M1 1.500h14L10 8v7l-4-2V8z" /></Ico><Chevron /></div>
                <span className="ml-[5px] flex h-[20px] w-[20px] items-center justify-center rounded-[4px] border border-[#3d3d3d] bg-[#545454] text-[#a0a0a0]"><Ico><path d="M1 5h9M1 5v3h13M2 8v7h11V8M6 11h3" /><path d="M12 0v7M8.500 3.500h7" stroke="#eee" strokeWidth="1.600" /></Ico></span>
            </div>
            <div className="flex flex-1 flex-col bg-[repeating-linear-gradient(180deg,#282828_0_20px,#2b2b2b_20px_40px)]">
                <div className="flex h-[20px] items-center text-[#e0e0e0]"><span className="ml-[22px] mr-[6px]"><ArchiveSolid /></span><span className="pt-[2px] tracking-[-0.400px] text-[#bdbdbd]">Scene Collection</span></div>
                <div className="flex h-[20px] items-center text-[#e0e0e0]">
                    <Chevron className="ml-[24px] mr-[4px] w-[11px] h-[11px]" />
                    <span className="flex h-[19px] w-[20px] items-center justify-center rounded-[4px] border border-[#777] bg-[#4a4a4a]"><ArchiveSolid /></span>
                    <span className="ml-[4px] flex-1 pt-[2px] text-white">Collection</span>
                    <span className="mr-[8px] flex h-[11px] w-[11px] items-center justify-center bg-[#e6e6e6]"><Ico className="w-[10px] h-[10px] text-[#222]"><path d="M2 8l4 5 8-11" strokeWidth="2.600" /></Ico></span>
                    <Eye /><span className="ml-[6px] mr-[10px]"><Camera /></span>
                </div>
                {EMPTIES.map((e) => (
                    <div key={e.name} className={`flex h-[20px] items-center ${e.hidden ? 'text-[#707070]' : 'text-[#c6c6c6]'}`}>
                        <ChevronRight className="ml-[44px] mr-[7px] w-[11px] h-[11px] text-[#999]" />
                        <ImageSolid className={e.hidden ? 'w-[15px] h-[14px] text-[#7a5639]' : 'w-[15px] h-[14px] text-[#c5824b]'} />
                        <span className={`ml-[6px] pt-[2px] ${e.w}`}>{e.name}</span>
                        <ImageLine className={e.hidden ? 'w-[15px] h-[14px] text-[#6f3b40]' : 'w-[15px] h-[14px] text-[#b4565f]'} />
                        <span className="flex-1" />
                        <span className={e.hidden ? 'text-[#888]' : 'text-[#e6e6e6]'}>{e.hidden ? <EyeShut /> : <Eye />}</span>
                        <span className="ml-[6px] mr-[10px] text-[#e6e6e6]"><Camera /></span>
                    </div>
                ))}
                <div className="flex h-[20px] items-center bg-[#334d80]">
                    <EditMode className="ml-[2px] w-[15px] h-[15px] text-[#b7c6e6]" />
                    <ChevronRight className="ml-[27px] mr-[4px] w-[11px] h-[11px] text-[#aaa]" />
                    <span className="flex h-[18px] w-[19px] items-center justify-center rounded-[4px] bg-[#66799f] text-[#d98d55]"><Ico className="w-[14px] h-[14px]"><path d="M2.500 2h11L9 14.500H7z" strokeWidth="2.600" /></Ico></span>
                    <span className="ml-[4px] w-[52px] pt-[2px] text-[#ffaf29]">Plane</span>
                    <Wrench className="w-[15px] h-[15px] text-[#6d93ea]" />
                    <span className="ml-[2px] flex h-[18px] w-[19px] items-center justify-center rounded-[4px] bg-[#2c6e80] text-[#00d6a3]"><MeshData className="w-[15px] h-[15px]" /></span>
                    <span className="flex-1" />
                    <span className="text-[#e6e6e6]"><Eye /></span>
                    <span className="ml-[6px] mr-[10px] text-[#e6e6e6]"><Camera /></span>
                </div>
            </div>
            <span className="absolute left-[28px] top-[70px] h-[91px] w-px bg-[#666]" />
        </div>
    );
}

/* ---------- properties editor ---------- */

const PROP_TABS: { id: string; cls: string; art: ReactNode }[] = [
    { id: 'tool', cls: 'mb-[8px] text-[#aaa]', art: <Ico><path d="M4 0v8M2 9h4v4l-2 2-2-2z" strokeWidth="1.600" /><path d="M9 1v4l3 2 3-2V1M12 7v8" strokeWidth="2.200" /></Ico> },
    { id: 'render', cls: 'mb-[1px] text-[#aaa]', art: <Ico><path d="M1 5h10v9H1zM4 4V2h4v2M3 8h6M3 10.500h6" strokeWidth="1.500" /><path d="M12 3h3.500v12H12z" fill="currentColor" stroke="none" /></Ico> },
    { id: 'output', cls: 'mb-[1px] text-[#aaa]', art: <Ico><path d="M0 1h16v7h-3V6H3v2H0zM4 8h8v7H4z" fill="currentColor" stroke="none" /><path d="M5 14l3-5 3 5z" fill="#333" stroke="none" /></Ico> },
    { id: 'viewlayer', cls: 'mb-[1px] text-[#aaa]', art: <Layers /> },
    { id: 'scene', cls: 'mb-[1px] text-[#aaa]', art: <SceneIcon /> },
    { id: 'world', cls: 'mb-[9px] text-[#b4525c]', art: <Ico><circle cx="8" cy="8" r="6.500" /><path d="M3 4l4-2 2 3-3 1-1 3-3-2zM9 8l4 0-1 4-3 2z" fill="currentColor" /></Ico> },
    { id: 'collection', cls: 'mb-[9px] text-[#dedede]', art: <Archive /> },
    { id: 'object', cls: 'mb-[1px] text-[#cd7f45]', art: <Ico><path d="M3.500 3.500h9v9h-9z" fill="currentColor" stroke="none" /><path d="M.6 4V.6H4M12 .6h3.400V4M15.400 12v3.400H12M4 15.400H.6V12" /></Ico> },
    { id: 'modifier', cls: 'mb-[1px] text-[#5c86da]', art: <Ico><path d="M2 14l6-6Q7 4 11 1.500h1.500l-2 3.500 1 1.500h2l1.500-2q.5 5-5 5.500l-6 5.500q-2 .5-2-1.500z" fill="currentColor" /></Ico> },
    { id: 'particles', cls: 'mb-[1px] text-[#5c86da]', art: <Ico><path d="M3 3h11M3 3v11M3 3l10 10" /><circle cx="3" cy="3" r="2.500" fill="currentColor" /><circle cx="14" cy="2.500" r="1" fill="currentColor" /><circle cx="3" cy="14" r="1" fill="currentColor" /><circle cx="14" cy="14" r="1" fill="currentColor" /></Ico> },
    { id: 'physics', cls: 'mb-[1px] text-[#5c86da]', art: <Ico><path d="M11 2a6.800 6.800 0 1 0 3.500 4" /><circle cx="8" cy="8" r="3" fill="currentColor" /><circle cx="13.500" cy="2.500" r="1.300" fill="currentColor" /></Ico> },
    { id: 'constraint', cls: 'mb-[1px] text-[#5c86da]', art: <Ico><circle cx="6" cy="10" r="5.300" /><circle cx="6" cy="10" r="2" strokeWidth="2" /><path d="M2 6.500L12 1q3.500 0 3 3l-4 8" /></Ico> },
    { id: 'data', cls: 'mb-[1px] rounded-l-[4px] bg-[#303030] text-[#00d6a3]', art: <MeshData /> },
    { id: 'material', cls: 'mb-[1px] text-[#b4525c]', art: <Ico><circle cx="8" cy="8" r="7" /><path d="M8 1a7 7 0 0 1 7 7H8zM8 8v7a7 7 0 0 1-7-7z" fill="currentColor" stroke="none" /></Ico> },
];

const CLOSED_PANELS = ['UV Maps', 'Color Attributes', 'Attributes', 'Texture Space', 'Remesh', 'Geometry Data', 'Animation', 'Custom Properties'];

function ListPanel({ title, dim, children }: { title: string; dim?: boolean; children?: ReactNode }) {
    return (
        <div className={`rounded-[4px] bg-[#3d3d3d] ${children ? 'h-[146px]' : 'h-[121px]'}`}>
            <div className="flex h-[26px] items-center pl-[8px] pr-[7px]">
                <Chevron className="mr-[3px] w-[11px] h-[11px] text-[#aaa]" /><span className="flex-1">{title}</span><Dots />
            </div>
            <div className="mt-[8px] flex h-[79px] pl-[9px]">
                <div className="flex w-[242px] items-end rounded-[3px] bg-[#2d2d2d] border-b border-[#484848] pb-[6px]">
                    <span className="ml-[11px] mr-[108px] h-[6px] w-[7px] bg-[#aaa] [clip-path:polygon(0_0,100%_50%,0_100%)]" />
                    <Dots />
                </div>
                <div className="ml-[10px] flex w-[18px] flex-col">
                    <span className={`flex h-[18px] items-center justify-center rounded-t-[3px] ${dim ? 'bg-[#474747] text-[#666]' : 'bg-[#545454]'}`}><Ico className="w-[12px] h-[12px]"><path d="M8 2v12M2 8h12" /></Ico></span>
                    <span className="mt-px flex h-[19px] items-center justify-center rounded-b-[3px] bg-[#474747] text-[#666]"><Ico className="w-[12px] h-[12px]"><path d="M2 8h12" /></Ico></span>
                    <span className="mt-[8px] flex h-[18px] items-center justify-center rounded-[3px] bg-[#282828]"><Chevron className="w-[11px] h-[11px]" /></span>
                </div>
            </div>
            {children}
        </div>
    );
}

function Properties() {
    return (
        <div className="flex h-[644px] flex-col overflow-hidden rounded-[5px] border border-[#3a3a3a] bg-[#303030] text-[#e0e0e0]">
            <div className="mb-[1px] flex h-[23px] shrink-0 items-center">
                <div className={`${DARK_BTN} ml-[7px] w-[32px] justify-around px-[3px]`}>
                    <Ico><rect x="0" y="1" width="16" height="6" rx="3" fill="currentColor" stroke="none" /><rect x="0" y="9" width="16" height="6" rx="3" fill="currentColor" stroke="none" /><path d="M10 4h4M10 12h4" stroke="#282828" strokeWidth="3" /></Ico>
                    <Chevron />
                </div>
                <div className="ml-[67px] flex h-[20px] w-[119px] items-center rounded-[4px] border border-[#3d3d3d] bg-[#1d1d1d] pl-[3px]"><Search /><span className="ml-[6px] text-[#6c6c6c]">Search</span></div>
                <div className={`${DARK_BTN} ml-[78px] w-[20px] justify-center`}><Chevron /></div>
            </div>
            <div className="flex flex-1">
                <div className="flex w-[27px] flex-col bg-[#1d1d1d] pt-[8px]">
                    {PROP_TABS.map((t) => <span key={t.id} className={`flex h-[26px] mt-[1px] ml-[1px] shrink-0 items-center justify-center ${t.cls}`}>{t.art}</span>)}
                </div>
                <div className="ml-[8px] w-[288px]">
                    <div className="flex h-[36px] items-center pl-[3px]">
                        <Ico><path d="M4 4h8v8H4z" fill="currentColor" stroke="none" /><path d="M.6 4V.6H4M12 .6h3.400V4M15.400 12v3.400H12M4 15.400H.6V12" /></Ico>
                        <span className="ml-[8px] w-[43px]">Plane</span>
                        <ChevronRight className="w-[11px] h-[11px]" />
                        <MeshData className="ml-[7px] w-[15px] h-[15px]" />
                        <span className="ml-[8px] flex-1">Plane</span>
                        <span className="mr-[2px] text-[#999]"><Pin /></span>
                    </div>
                    <div className="mt-[8px] flex h-[20px] items-center overflow-hidden rounded-[4px] border border-[#3d3d3d] bg-[#1d1d1d]">
                        <span className="flex h-full w-[31px] items-center justify-around border-r border-[#3d3d3d] bg-[#282828] px-[3px]"><MeshData /><Chevron /></span>
                        <span className="flex-1 pl-[7px]">Plane</span>
                        <span className="flex h-full w-[19px] items-center justify-center bg-[#545454] text-[#999]"><Ico><path d="M8 1l6 2q1 9-6 12Q1 12 2 3z" /></Ico></span>
                    </div>
                    <div className="mt-[10px] flex flex-col gap-[2px]">
                        <ListPanel title="Vertex Groups" />
                        <ListPanel title="Shape Keys" dim>
                            <div className="mt-[7px] flex items-center pl-[9px]"><span className="h-[12px] w-[12px] rounded-[2px] bg-[#545454]" /><span className="ml-[4px]">Add Rest Position</span></div>
                        </ListPanel>
                        {CLOSED_PANELS.map((p) => (
                            <div key={p} className="flex h-[25px] items-center rounded-[4px] bg-[#3d3d3d] pl-[8px] pr-[7px]">
                                <ChevronRight className="mr-[3px] w-[11px] h-[11px] text-[#aaa]" /><span className="flex-1 pt-px">{p}</span><Dots />
                            </div>
                        ))}
                    </div>
                </div>
            </div>
        </div>
    );
}

/* ---------- window chrome ---------- */

const TABS = [
    { name: 'Modeling', w: 'w-[69px]' }, { name: 'Sculpting', w: 'w-[70px]' }, { name: 'UV Editing', w: 'w-[76px]' }, { name: 'Texture Paint', w: 'w-[89px]' },
    { name: 'Shading', w: 'w-[63px]' }, { name: 'Animation', w: 'w-[74px]' }, { name: 'Rendering', w: 'w-[73px]' }, { name: 'Compositing', w: 'w-[88px]' },
    { name: 'Geometry Nodes', w: 'w-[107px]' }, { name: 'Scripting', w: 'w-[67px]' },
];

function TitleBar() {
    return (
        <div className="flex h-[29px] shrink-0 items-center bg-white text-black">
            <BlenderColor className="ml-[2px] w-[20px] h-[20px]" />
            <span className="ml-[5px] flex-1 font-['Open_Sans',sans-serif] text-[14.300px] tracking-[-0.110px] [word-spacing:0px]">* vrios [C:\Users\Matheus\Desktop\modelagens\Passat B5 1999\vrios.blend] - Blender 4.4.3</span>
            <svg viewBox="1760 0 160 29" className="w-[160px] h-[29px]" fill="none" stroke="#000">
                <path d="M1765 13.500h12M1823.500 10.500h9v9h-9zM1826 10V8.500h8.500v9H1833M1882.500 8.500l11 11M1893.500 8.500l-11 11" />
            </svg>
        </div>
    );
}

function TopBar() {
    return (
        <div className="flex h-[27px] shrink-0 items-start bg-[#181818] text-[#e0e0e0]">
            <span className="ml-[9px] mt-[4px] flex h-[18px] w-[18px] items-center justify-center rounded-[4px] bg-[#2e2e2e]"><SiBlender size={16} color="#eee" /></span>
            <div className="ml-[8px] mt-[3px] flex h-[20px] w-[230px] items-center">
                <span className="w-[34px]">File</span><span className="w-[36px]">Edit</span><span className="w-[52px]">Render</span><span className="w-[59px]">Window</span><span>Help</span>
            </div>
            <div className="mt-[6px] flex h-[20px] flex-1 gap-px text-[#989898]">
                <span className="flex w-[54px] items-center justify-center rounded-t-[4px] bg-[#303030] text-white">Layout</span>
                {TABS.map((t) => <span key={t.name} className={`flex items-center justify-center rounded-t-[4px] bg-[#1d1d1d] ${t.w}`}>{t.name}</span>)}
                <span className="flex w-[20px] items-center justify-center bg-[#1d1d1d]"><Ico className="w-[11px] h-[11px]"><path d="M8 1v14M1 8h14" strokeWidth="1.600" /></Ico></span>
            </div>
            <div className="mt-[3px] flex h-[20px] w-[172px] items-center overflow-hidden rounded-[4px] border border-[#3d3d3d] bg-[#1d1d1d]">
                <span className="flex h-full w-[31px] items-center justify-around border-r border-[#3d3d3d] bg-[#282828] px-[3px]"><SceneIcon /><Chevron /></span>
                <span className="flex-1 pl-[6px]">Scene</span>
                <span className="mr-[4px] text-[#777]"><Pin /></span>
                <span className="flex h-full w-[20px] items-center justify-center bg-[#545454]"><NewDoc /></span>
                <span className="flex h-full w-[20px] items-center justify-center bg-[#2a2a2a] text-[#555]"><Cross /></span>
            </div>
            <div className="ml-[5px] mr-[8px] mt-[3px] flex h-[20px] w-[152px] items-center overflow-hidden rounded-[4px] border border-[#3d3d3d] bg-[#1d1d1d]">
                <span className="flex h-full w-[31px] items-center justify-around border-r border-[#3d3d3d] bg-[#282828] px-[3px]"><Layers /><Chevron /></span>
                <span className="flex-1 pl-[6px]">ViewLayer</span>
                <span className="flex h-full w-[20px] items-center justify-center bg-[#545454]"><NewDoc /></span>
                <span className="flex h-full w-[20px] items-center justify-center bg-[#2a2a2a] text-[#555]"><Cross /></span>
            </div>
        </div>
    );
}

function StatusBar() {
    return (
        <div className="flex h-[23px] shrink-0 items-center justify-end bg-[#181818] pr-[11px] text-[#8c8c8c]">
            <Ico><circle cx="8" cy="8" r="6.500" /><path d="M8 1.500q-5 6.500 0 13M8 1.500q5 6.500 0 13M2 5.500h12M2 10.500h12" /><path d="M1 1l14 14" strokeWidth="2" /></Ico>
            <span className="ml-[8px] mr-[4px] h-[13px] w-px bg-[#777]" />
            <span className="tracking-[0px]">4.4.3</span>
        </div>
    );
}

function Taskbar() {
    return (
        <div className="flex h-[50px] shrink-0 items-center bg-[#000207] font-['Open_Sans',sans-serif] text-white [word-spacing:0px]">
            <span className="flex w-[60px] justify-center"><FaWindows size={22} /></span>
            <span className="flex h-full w-[430px] items-center bg-[#333333] pl-[15px] text-[17.500px] tracking-[-0.230px] text-[#9d9d9d]">Pesquisar na Web e no Windows</span>
            <svg viewBox="0 0 24 20" className="ml-[18px] w-[24px] h-[20px]" fill="none" stroke="#fff" strokeWidth="1.300"><path d="M4.500 1.500h15v17h-15zM3 4H1v12h2M21 4h2v12h-2" /></svg>
            <FaEdgeLegacy className="ml-[38px] text-[#0078d7]" size={27} />
            <svg viewBox="0 0 28 24" className="ml-[34px] w-[28px] h-[24px]">
                <path d="M0 0h11l1 3h16v20H0z" fill="#f5c64b" /><path d="M2 2h8v2H2z" fill="#fff3c4" /><path d="M0 5h28v18H0z" fill="#fde18f" />
                <path d="M5 23.500V14q0-2 2-2h14q2 0 2 2v9.500h-5V18h-8v5.500z" fill="#3fb7ea" />
            </svg>
            <svg viewBox="0 0 26 30" className="ml-[35px] w-[26px] h-[30px]">
                <path d="M5 9V5q0-3 3-4t5 1v6M9 8V5q1-3 5-3t4 3v3" fill="none" stroke="#fff" strokeWidth="1.400" />
                <path d="M0 9l26-2-2 21-8 2L1 27z" fill="#fff" />
                <path d="M4 13.500l6-.6v5H4zM11 12.800l6.500-.6v5.600H11zM4 19h6v5l-6-.6zM11 19h6.500v6l-6.500-.9z" fill="#000" />
            </svg>
            <span className="ml-[24px] flex h-full w-[51px] items-center justify-center border-b-[3px] border-[#76b9ed]">
                <svg viewBox="0 0 32 32" className="mt-[3px] w-[32px] h-[32px]" fill="none" stroke="#e8174a">
                    <circle cx="16" cy="16" r="14.500" strokeWidth="1.600" /><circle cx="16" cy="16" r="12.300" strokeWidth="1" stroke="#a01236" />
                    <ellipse cx="16" cy="16" rx="6.800" ry="11.500" strokeWidth="1.600" /><path d="M17 5q11 11 1 22" strokeWidth="1.300" />
                </svg>
            </span>
            <span className="ml-[6px] flex h-full w-[61px] items-center justify-center border-b-[3px] border-[#76b9ed] bg-[#34383d]"><BlenderColor className="mr-[1px] w-[28px] h-[28px] mt-[2px]" /></span>
            <span className="flex-1" />
            <svg viewBox="1620 1036 150 40" className="w-[150px] h-[40px]" fill="none" stroke="#fff" strokeWidth="1.500">
                <path d="M1626 1060l7.500-8 7.500 8" />
                <path d="M1658 1051h14v9h-14z" fill="#fff" /><path d="M1673 1053.500v4M1654 1049v4h4v-4M1656 1053v7" />
                <path d="M1699 1062l2-2M1695 1062q0-5 6-6M1691 1062q0-9 10-10M1687 1062q0-12 14-14" /><circle cx="1700" cy="1061" r="1.600" fill="#fff" />
                <path d="M1713.500 1053.500h3l4-4v14l-4-4h-3zM1723 1053q2 3 0 6.500M1726 1051q4 5 0 10.500" /><path d="M1729 1048q6 8 0 17" stroke="#777" />
                <path d="M1743 1045h20v17h-7l-3 3-3-3h-7z" fill="#fff" stroke="none" /><path d="M1747 1050h12M1747 1054h12M1747 1058h8" stroke="#000" />
            </svg>
            <div className="ml-[6px] w-[49px] text-[14.500px] leading-[22px] tracking-[-0.300px]"><div>POR</div><div>PTB</div></div>
            <div className="w-[76px] text-center text-[14.500px] leading-[21.500px] tracking-[-0.200px] whitespace-nowrap"><div>19:11</div><div>04/10/2025</div></div>
            <span className="ml-[13px] mr-[5px] h-full w-px bg-[#555]" />
        </div>
    );
}

export default function App() {
    return (
        <div className="relative flex h-[1080px] w-[1920px] flex-col overflow-hidden bg-[#181818] font-['Inter',sans-serif] text-[12px] leading-[16px] tracking-[-0.180px] [word-spacing:-1px] whitespace-nowrap">
            <TitleBar />
            <TopBar />
            <div className="flex h-[951px] shrink-0">
                <div className="ml-px flex w-[1585px] flex-col gap-[3px]">
                    <Viewport />
                    <Timeline />
                </div>
                <div className="ml-[2px] flex w-[331px] flex-col gap-[3px]">
                    <Outliner />
                    <Properties />
                </div>
            </div>
            <StatusBar />
            <Taskbar />
            {/* activation watermark floats over everything */}
            <div className="absolute left-[1482px] top-[924px] font-['Open_Sans',sans-serif] text-[#8e8e8e]/90 [word-spacing:0px]">
                <div className="text-[24.500px] leading-[32px] tracking-[-0.180px]">Ativar o Windows</div>
                <div className="text-[17.500px] leading-[28px] tracking-[-0.190px]">Acesse Configurações para ativar o Windows.</div>
            </div>
        </div>
    );
}
